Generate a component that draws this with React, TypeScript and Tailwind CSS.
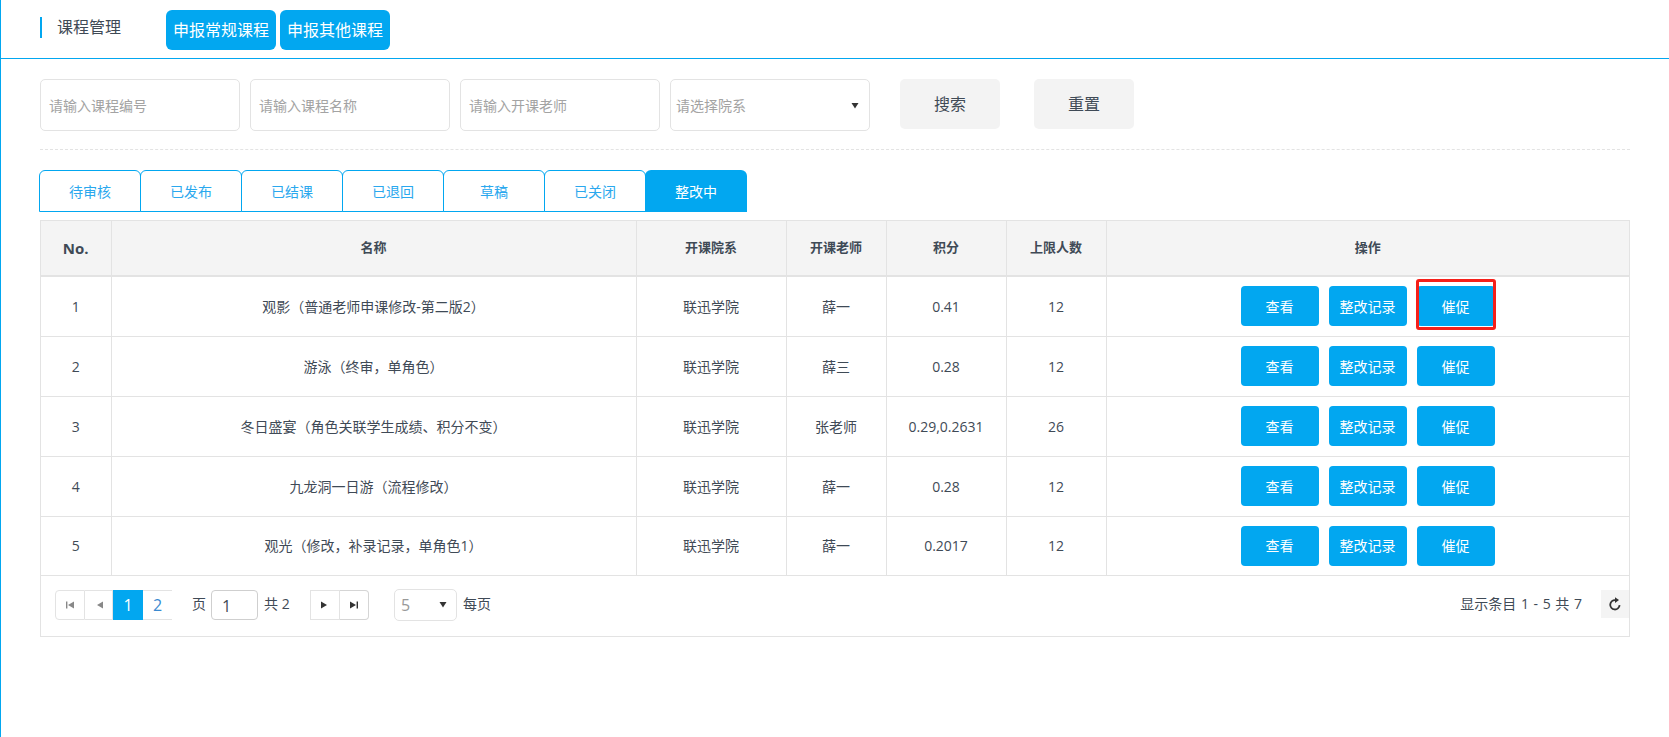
const tabs = ['待审核', '已发布', '已结课', '已退回', '草稿', '已关闭', '整改中'];
const filters = ['请输入课程编号', '请输入课程名称', '请输入开课老师'];

const rows = [
  { no: 1, name: '观影（普通老师申课修改-第二版2）', teacher: '薛一', score: '0.41', limit: 12 },
  { no: 2, name: '游泳（终审，单角色）', teacher: '薛三', score: '0.28', limit: 12 },
  { no: 3, name: '冬日盛宴（角色关联学生成绩、积分不变）', teacher: '张老师', score: '0.29,0.2631', limit: 26 },
  { no: 4, name: '九龙洞一日游（流程修改）', teacher: '薛一', score: '0.28', limit: 12 },
  { no: 5, name: '观光（修改，补录记录，单角色1）', teacher: '薛一', score: '0.2017', limit: 12 },
];

const Tri = ({ dir, bar, color }: { dir: 'left' | 'right'; bar?: boolean; color: string }) => (
  <svg width="10" height="10" viewBox="0 0 10 10" fill={color}>
    {dir === 'left' ? (
      <>
        <path d="M9 1.5v7L3 5z" />
        {bar && <rect x="1" y="1.5" width="1.4" height="7" />}
      </>
    ) : (
      <>
        <path d="M1 1.5v7L7 5z" />
        {bar && <rect x="7.6" y="1.5" width="1.4" height="7" />}
      </>
    )}
  </svg>
);

const ActionButton = ({ label }: { label: string }) => (
  <button className="w-[78px] h-10 rounded-[4px] bg-[#02a7f0] text-white text-[14px]">{label}</button>
);

export default function App() {
  return (
    <div
      className="h-[737px] border-l border-[#02a7f0] bg-white text-[14px] text-[#3f4a56] overflow-hidden"
      style={{ fontFamily: '"Open Sans", "Noto Sans CJK SC", sans-serif' }}
    >
      {/* Header */}
      <div className="h-[59px] border-b border-[#02a7f0] flex items-start pl-[39px]">
        <div className="mt-[17px] h-[21px] border-l-2 border-[#02a7f0] pl-[15px] text-[16px] leading-[21px] w-[126px]">
          课程管理
        </div>
        <div className="mt-[10px] flex gap-1">
          <button className="w-[110px] h-10 rounded-[6px] bg-[#02a7f0] text-white text-[16px]">申报常规课程</button>
          <button className="w-[110px] h-10 rounded-[6px] bg-[#02a7f0] text-white text-[16px]">申报其他课程</button>
        </div>
      </div>

      <div className="pl-[39px] pr-[39px]">
        {/* Filters */}
        <div className="mt-5 flex items-start">
          <div className="flex gap-[10px]">
            {filters.map((f) => (
              <div
                key={f}
                className="w-[200px] h-[52px] rounded-[5px] border border-[#e3e3e3] flex items-center pl-2 text-[#a3a3a3]"
              >
                {f}
              </div>
            ))}
            <div className="w-[200px] h-[52px] rounded-[5px] border border-[#e3e3e3] flex items-center justify-between pl-[5px] pr-[10px] text-[#a3a3a3]">
              <span>请选择院系</span>
              <svg width="8" height="7" viewBox="0 0 8 7" fill="#333">
                <path d="M0.5 1h7L4 6.5z" />
              </svg>
            </div>
          </div>
          <button className="ml-[30px] w-[100px] h-[50px] rounded-[5px] bg-[#f3f3f3] text-[16px]">搜索</button>
          <button className="ml-[34px] w-[100px] h-[50px] rounded-[5px] bg-[#f3f3f3] text-[16px]">重置</button>
        </div>

        <div className="mt-[18px] border-t border-dashed border-[#e3e3e3]" />

        {/* Tabs */}
        <div className="mt-5 -ml-px flex">
          {tabs.map((t, i) => (
            <div
              key={t}
              className={
                i === 6
                  ? 'w-[102px] h-[42px] rounded-t-[6px] bg-[#02a7f0] text-white flex items-center justify-center'
                  : 'w-[102px] h-[42px] -mr-px rounded-t-[6px] border border-[#02a7f0] text-[#2aa8ee] flex items-center justify-center'
              }
            >
              {t}
            </div>
          ))}
        </div>

        {/* Table */}
        <div className="mt-2 border border-[#e3e3e3]">
          <table className="w-full table-fixed border-collapse">
            <colgroup>
              <col className="w-[70px]" />
              <col className="w-[525px]" />
              <col className="w-[150px]" />
              <col className="w-[100px]" />
              <col className="w-[120px]" />
              <col className="w-[100px]" />
              <col />
            </colgroup>
            <thead>
              <tr className="h-[55px] bg-[#f4f4f4] border-b-2 border-[#e3e3e3]">
                {['No.', '名称', '开课院系', '开课老师', '积分', '上限人数', '操作'].map((h, i) => (
                  <th
                    key={h}
                    className={
                      i === 0
                        ? 'font-bold text-center text-[15px] border-r border-[#e3e3e3]'
                        : i === 6
                          ? 'font-semibold text-center text-[13px]'
                          : 'font-semibold text-center text-[13px] border-r border-[#e3e3e3]'
                    }
                  >
                    {h}
                  </th>
                ))}
              </tr>
            </thead>
            <tbody>
              {rows.map((r) => (
                <tr key={r.no} className="h-[60px] last:h-[59px] border-b border-[#e3e3e3] text-center">
                  <td className="border-r border-[#e3e3e3]">{r.no}</td>
                  <td className="border-r border-[#e3e3e3]">{r.name}</td>
                  <td className="border-r border-[#e3e3e3]">联迅学院</td>
                  <td className="border-r border-[#e3e3e3]">{r.teacher}</td>
                  <td className="border-r border-[#e3e3e3]">{r.score}</td>
                  <td className="border-r border-[#e3e3e3]">{r.limit}</td>
                  <td>
                    <div className="flex gap-[10px] pl-[134px]">
                      <ActionButton label="查看" />
                      <ActionButton label="整改记录" />
                      <div className="relative">
                        <ActionButton label="催促" />
                        {r.no === 1 && (
                          <div className="absolute -left-px -right-px -top-[7px] -bottom-[4px] rounded-[3px] border-[3px] border-[#f5201a]" />
                        )}
                      </div>
                    </div>
                  </td>
                </tr>
              ))}
            </tbody>
          </table>

          {/* Pagination */}
          <div className="h-[60px] flex items-start pt-[14px] pl-[14px]">
            <div className="flex h-[30px] items-stretch">
              <div className="w-[30px] border border-[#e3e3e3] rounded-l-[4px] flex items-center justify-center">
                <Tri dir="left" bar color="#888" />
              </div>
              <div className="w-[28px] border-y border-r border-[#e3e3e3] flex items-center justify-center">
                <Tri dir="left" color="#888" />
              </div>
              <div className="w-[30px] bg-[#02a7f0] text-white text-[16px] flex items-center justify-center">1</div>
              <div className="w-[29px] border-y border-[#e3e3e3] text-[#3a8ad0] text-[16px] flex items-center justify-center">
                2
              </div>
            </div>
            <span className="ml-5 leading-[28px]">页</span>
            <div className="ml-[5px] w-[47px] h-[30px] border border-[#cfcfcf] rounded-[4px] pl-[10px] text-[16px] leading-[30px]">
              1
            </div>
            <span className="ml-[6px] leading-[28px] w-[26px] whitespace-nowrap">共 2</span>
            <div className="ml-5 flex h-[30px]">
              <div className="w-[30px] border border-[#e3e3e3] flex items-center justify-center">
                <Tri dir="right" color="#333" />
              </div>
              <div className="w-[29px] border-y border-r border-[#d5d5d5] rounded-r-[4px] flex items-center justify-center">
                <Tri dir="right" bar color="#333" />
              </div>
            </div>
            <div className="ml-[25px] -mt-px w-[63px] h-8 border border-[#e3e3e3] rounded-[5px] flex items-center justify-between pl-[6px] pr-[9px] text-[#999] text-[16px]">
              <span>5</span>
              <svg width="8" height="7" viewBox="0 0 8 7" fill="#333">
                <path d="M0.5 1h7L4 6.5z" />
              </svg>
            </div>
            <span className="ml-[6px] leading-[28px]">每页</span>
            <span className="ml-auto leading-[28px] whitespace-nowrap [word-spacing:1px]">显示条目 1 - 5 共 7</span>
            <div className="ml-[19px] w-[28px] h-[28px] bg-[#f4f4f4] flex items-center justify-center">
              <svg width="14" height="14" viewBox="0 0 14 14">
                <path d="M11.6 8.2A4.7 4.7 0 1 1 7.4 3.1" fill="none" stroke="#333" strokeWidth="1.8" />
                <path d="M7 0.2l4 2.9L7 6z" fill="#333" />
              </svg>
            </div>
          </div>
        </div>
      </div>
    </div>
  );
}
